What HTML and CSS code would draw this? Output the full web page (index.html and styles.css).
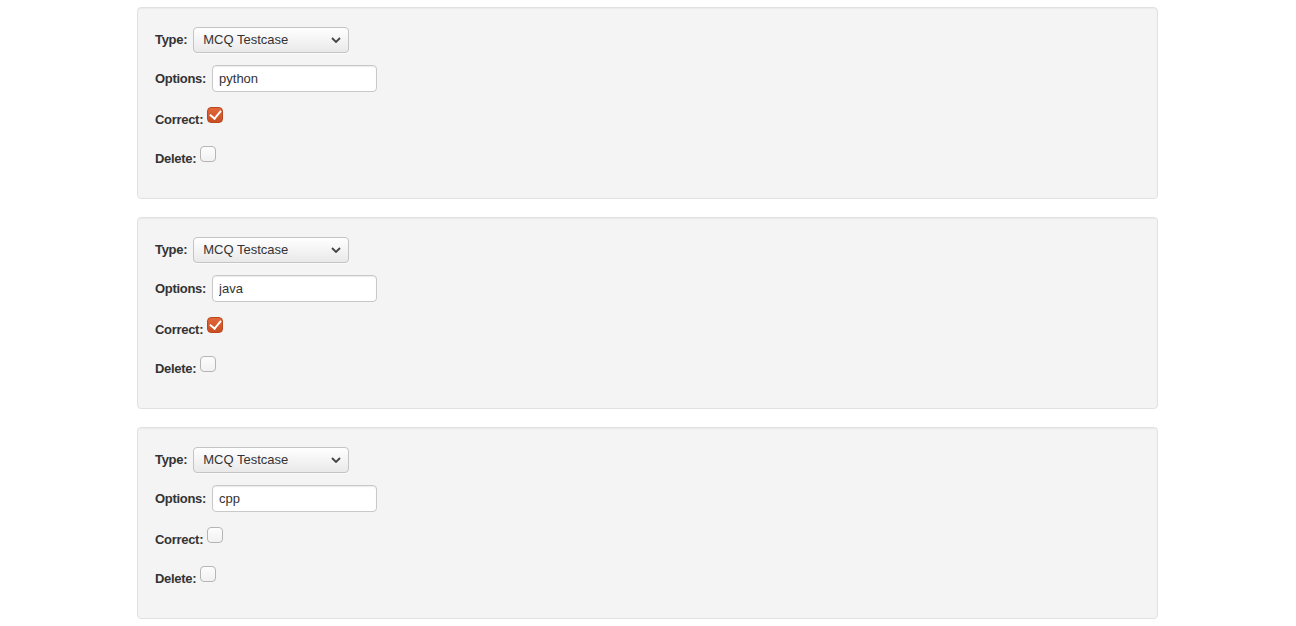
FILE: index.html
```html
<!DOCTYPE html>
<html lang="en">
<head>
    <meta charset="UTF-8">
    <meta name="viewport" content="width=device-width, initial-scale=1.0">
    <title>Testcases</title>
    <link rel="stylesheet" href="styles.css">
</head>
<body>
    <div class="container">

        <div class="testcase">
            <div class="field">
                <label>Type:</label>
                <span class="select-wrap">
                    <select class="select"><option>MCQ Testcase</option></select>
                    <svg class="chevron" width="10" height="6" viewBox="0 0 10 6"><path d="M1 1l4 4 4-4" fill="none" stroke="#444" stroke-width="1.8"/></svg>
                </span>
            </div>
            <div class="field">
                <label>Options:</label>
                <input class="text" type="text" value="python">
            </div>
            <div class="field check-row">
                <label>Correct:</label><input class="check" type="checkbox" checked>
            </div>
            <div class="field check-row last">
                <label>Delete:</label><input class="check" type="checkbox">
            </div>
        </div>

        <div class="testcase">
            <div class="field">
                <label>Type:</label>
                <span class="select-wrap">
                    <select class="select"><option>MCQ Testcase</option></select>
                    <svg class="chevron" width="10" height="6" viewBox="0 0 10 6"><path d="M1 1l4 4 4-4" fill="none" stroke="#444" stroke-width="1.8"/></svg>
                </span>
            </div>
            <div class="field">
                <label>Options:</label>
                <input class="text" type="text" value="java">
            </div>
            <div class="field check-row">
                <label>Correct:</label><input class="check" type="checkbox" checked>
            </div>
            <div class="field check-row last">
                <label>Delete:</label><input class="check" type="checkbox">
            </div>
        </div>

        <div class="testcase">
            <div class="field">
                <label>Type:</label>
                <span class="select-wrap">
                    <select class="select"><option>MCQ Testcase</option></select>
                    <svg class="chevron" width="10" height="6" viewBox="0 0 10 6"><path d="M1 1l4 4 4-4" fill="none" stroke="#444" stroke-width="1.8"/></svg>
                </span>
            </div>
            <div class="field">
                <label>Options:</label>
                <input class="text" type="text" value="cpp">
            </div>
            <div class="field check-row">
                <label>Correct:</label><input class="check" type="checkbox">
            </div>
            <div class="field check-row last">
                <label>Delete:</label><input class="check" type="checkbox">
            </div>
        </div>

    </div>
</body>
</html>
```

FILE: styles.css
```css
/* Basis */
body {
    font-family: 'Liberation Sans', Arial, sans-serif;
    font-size: 13px;
    line-height: 20px;
    color: #333;
    background-color: #fff;
    margin: 0;
    padding: 0 1px 0 0;
}

.container {
    width: 1021px;
    margin: 7px auto 0;
}

/* Testcase blok */
.testcase {
    background-color: #f4f4f4;
    border: 1px solid #e1e1e1;
    border-radius: 4px;
    box-shadow: inset 0 1px 1px rgba(0, 0, 0, 0.04);
    padding: 19px 17px 20px;
    margin-bottom: 18px;
    box-sizing: border-box;
    height: 192px;
}

.field {
    display: flex;
    align-items: center;
    margin-bottom: 12px;
}

.field label {
    font-weight: bold;
    letter-spacing: -0.3px;
    margin-right: 6px;
}

/* Select */
.select-wrap {
    position: relative;
    display: inline-block;
}

.select {
    appearance: none;
    -webkit-appearance: none;
    width: 156px;
    height: 26px;
    padding: 0 24px 1px 9px;
    font-family: inherit;
    font-size: 13px;
    color: #333;
    border: 1px solid #c4c4c4;
    border-radius: 4px;
    background: linear-gradient(to bottom, #ffffff, #e9e9e9);
    box-shadow: 0 1px 0 rgba(255, 255, 255, 0.6);
    margin: 0;
}

.chevron {
    position: absolute;
    right: 8px;
    top: 10px;
}

/* Tekstveld */
.text {
    width: 165px;
    height: 27px;
    box-sizing: border-box;
    padding: 0 6px;
    font-family: inherit;
    font-size: 13px;
    color: #333;
    background-color: #fff;
    border: 1px solid #c8c8c8;
    border-radius: 4px;
    box-shadow: inset 0 1px 1px rgba(0, 0, 0, 0.08);
    margin: 0;
}

/* Checkbox rijen */
.check-row {
    display: block;
    height: 25px;
    line-height: 20px;
    margin-bottom: 14px;
}

.check-row.last {
    margin-bottom: 0;
}

.check-row label {
    margin-right: 0;
    vertical-align: baseline;
}

.check {
    appearance: none;
    -webkit-appearance: none;
    position: relative;
    top: 3px;
    display: inline-block;
    width: 16px;
    height: 16px;
    margin: 0 0 4px 4px;
    vertical-align: baseline;
    box-sizing: border-box;
    border: 1px solid #b5b5b5;
    border-radius: 4px;
    background: linear-gradient(to bottom, #fdfdfd, #f1f1f1);
}

.check:checked {
    border-color: #b9471f;
    background: linear-gradient(to bottom, #e0683a, #c94f23);
}

.check:checked::after {
    content: '';
    position: absolute;
    left: 4px;
    top: 0;
    width: 5px;
    height: 9px;
    border: solid #fff;
    border-width: 0 2.5px 2.5px 0;
    transform: rotate(40deg);
}
```
